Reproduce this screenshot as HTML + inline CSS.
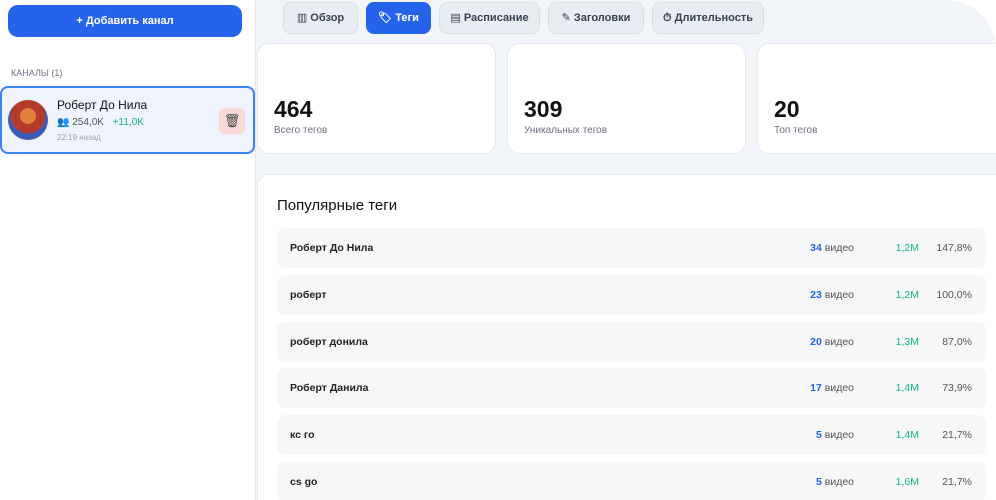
<!DOCTYPE html>
<html><head><meta charset="utf-8"><style>
*{box-sizing:border-box;margin:0;padding:0}
body{width:996px;height:500px;overflow:hidden;background:#fff;font-family:"Liberation Sans","DejaVu Sans",sans-serif;position:relative}
.side{position:absolute;left:0;top:0;width:256px;height:500px;background:#fff;border-right:1px solid #e5e7eb;border-bottom-left-radius:40px}
.main{position:absolute;left:256px;top:0;width:740px;height:500px;background:#f1f4f9;border-top-right-radius:50px;overflow:hidden}
.btn{position:absolute;left:8px;top:5px;width:234px;height:32px;background:#2563eb;border-radius:10px;color:#fff;font-weight:bold;font-size:11px;text-align:center;line-height:32px}
.lbl{position:absolute;left:11px;top:68px;font-size:9px;color:#6b7280}
.card{position:absolute;left:0;top:86px;width:255px;height:68px;background:#eef3fd;border:2px solid #3b82f6;border-radius:8px}
.av{position:absolute;left:6px;top:12px;width:40px;height:40px;border-radius:50%;background:radial-gradient(circle at 50% 40%,#e0803a 0 25%,#b33a2a 26% 55%,#3b5bb5 56%)}
.name{position:absolute;left:55px;top:10px;font-size:12px;color:#111;font-weight:500}
.sub{position:absolute;left:55px;top:29px;font-size:10px;color:#555}
.sub b{color:#10b981;font-weight:normal;margin-left:6px}
.time{position:absolute;left:55px;top:45px;font-size:8px;color:#9ca3af}
.del{position:absolute;left:217px;top:20px;width:26px;height:26px;background:#fcd9d9;border-radius:6px;text-align:center;line-height:26px;font-size:13px;color:#444}
.tab{position:absolute;top:2px;height:32px;border:1px solid #d8dde6;background:#e8ecf3;border-radius:8px;font-size:11px;font-weight:bold;color:#374151;line-height:30px;text-align:center}
.tab.on{background:#2563eb;color:#fff;border-color:#2563eb}
.stat{position:absolute;top:43px;height:111px;background:#fff;border:1px solid #e5e7eb;border-radius:12px;width:239px}
.stat .n{position:absolute;left:16px;top:52px;font-size:23px;font-weight:bold;color:#111}
.stat .t{position:absolute;left:16px;top:81px;font-size:10px;color:#6b7280}
.panel{position:absolute;left:1px;top:174px;width:760px;height:340px;background:#fff;border:1px solid #e5e7eb;border-radius:12px}
.h{position:absolute;left:19px;top:22px;font-size:15px;color:#111}
.row{position:absolute;left:19px;width:709px;height:40px;background:#f6f7f9;border-radius:8px;font-size:10.5px}
.row .k{position:absolute;left:13px;top:14px;font-weight:bold;color:#222}
.row .v{position:absolute;right:132px;top:14px;color:#555}
.row .v b{color:#2563eb}
.row .g{position:absolute;right:67px;top:14px;color:#10b981}
.row .p{position:absolute;right:14px;top:14px;color:#555}
</style></head><body>
<div class="side">
<div class="btn">+ Добавить канал</div>
<div class="lbl">КАНАЛЫ (1)</div>
<div class="card"><div class="av"></div><div class="name">Роберт До Нила</div>
<div class="sub">👥 254,0K <b>+11,0K</b></div><div class="time">22:19 назад</div><div class="del">🗑</div></div>
</div>
<div class="main">
<div class="tab" style="left:27px;width:75px">▥ Обзор</div>
<div class="tab on" style="left:110px;width:65px">🏷 Теги</div>
<div class="tab" style="left:183px;width:101px">▤ Расписание</div>
<div class="tab" style="left:292px;width:96px">✎ Заголовки</div>
<div class="tab" style="left:396px;width:112px">⏱ Длительность</div>
<div class="stat" style="left:1px"><div class="n">464</div><div class="t">Всего тегов</div></div>
<div class="stat" style="left:251px"><div class="n">309</div><div class="t">Уникальных тегов</div></div>
<div class="stat" style="left:501px;width:260px"><div class="n">20</div><div class="t">Топ тегов</div></div>
<div class="panel"><div class="h">Популярные теги</div>
<div class="row" style="top:53px"><span class="k">Роберт До Нила</span><span class="v"><b>34</b> видео</span><span class="g">1,2M</span><span class="p">147,8%</span></div>
<div class="row" style="top:100px"><span class="k">роберт</span><span class="v"><b>23</b> видео</span><span class="g">1,2M</span><span class="p">100,0%</span></div>
<div class="row" style="top:147px"><span class="k">роберт донила</span><span class="v"><b>20</b> видео</span><span class="g">1,3M</span><span class="p">87,0%</span></div>
<div class="row" style="top:193px"><span class="k">Роберт Данила</span><span class="v"><b>17</b> видео</span><span class="g">1,4M</span><span class="p">73,9%</span></div>
<div class="row" style="top:240px"><span class="k">кс го</span><span class="v"><b>5</b> видео</span><span class="g">1,4M</span><span class="p">21,7%</span></div>
<div class="row" style="top:287px"><span class="k">cs go</span><span class="v"><b>5</b> видео</span><span class="g">1,6M</span><span class="p">21,7%</span></div>
</div>
</div>
</body></html>
